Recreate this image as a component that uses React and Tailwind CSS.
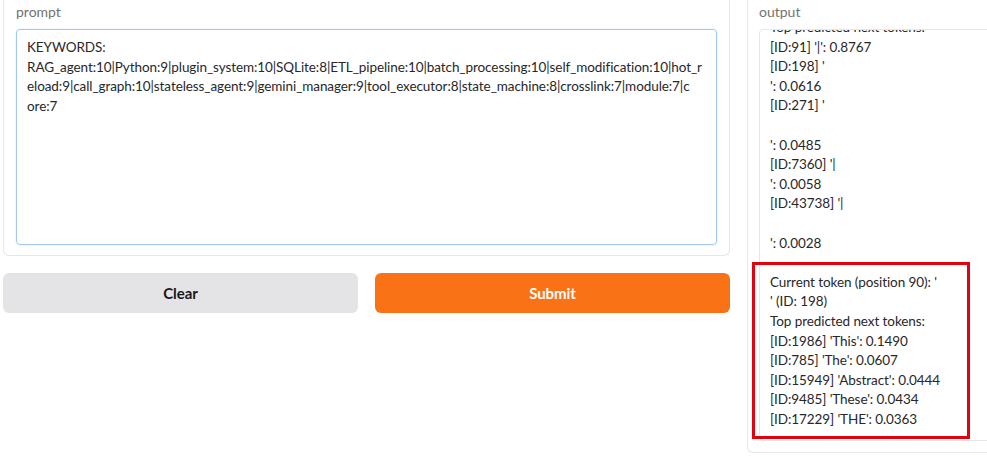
import React from "react";

const promptLines = [
  "KEYWORDS:",
  "RAG_agent:10|Python:9|plugin_system:10|SQLite:8|ETL_pipeline:10|batch_processing:10|self_modification:10|hot_r",
  "eload:9|call_graph:10|stateless_agent:9|gemini_manager:9|tool_executor:8|state_machine:8|crosslink:7|module:7|c",
  "ore:7",
];

const outputLines = [
  "Top predicted next tokens:",
  "[ID:91] '|': 0.8767",
  "[ID:198] '",
  "': 0.0616",
  "[ID:271] '",
  "",
  "': 0.0485",
  "[ID:7360] '|",
  "': 0.0058",
  "[ID:43738] '|",
  "",
  "': 0.0028",
  "",
  "Current token (position 90): '",
  "' (ID: 198)",
  "Top predicted next tokens:",
  "[ID:1986] 'This': 0.1490",
  "[ID:785] 'The': 0.0607",
  "[ID:15949] 'Abstract': 0.0444",
  "[ID:9485] 'These': 0.0434",
  "[ID:17229] 'THE': 0.0363",
];

export default function App() {
  return (
    <div className="relative w-[987px] h-[463px] overflow-hidden bg-white font-['Lato',sans-serif] text-[13.5px] tracking-[-0.08px] text-[#27272a]">
      <div className="flex items-start gap-[17px] pl-[3px]">
        <div className="w-[727px] flex flex-col gap-[17px] shrink-0">
          <div className="border border-t-0 border-[#e5e7eb] rounded-b-[6px] px-[12px] pb-[10px]">
            <div className="h-[29px] leading-[24px] text-[14px] tracking-normal text-[#737373]">prompt</div>
            <div className="h-[216px] border border-[#a3c9f1] rounded-[4px] px-[10px] pt-[8px] leading-[19.6px] shadow-[0_0_0_1px_rgba(163,201,241,0.15)]">
              {promptLines.map((l, i) => (
                <div key={i} className="whitespace-nowrap">{l}</div>
              ))}
            </div>
          </div>
          <div className="grid grid-cols-2 gap-[17px]">
            <button className="h-[40px] rounded-[6px] bg-[#e4e4e7] font-bold text-[15px] text-[#18181b]">Clear</button>
            <button className="h-[40px] rounded-[6px] bg-[#f97316] font-bold text-[15px] text-white">Submit</button>
          </div>
        </div>
        <div className="w-[260px] h-[453px] shrink-0 border border-t-0 border-[#e5e7eb] rounded-bl-[6px] px-[11px] pb-[11px] flex flex-col">
          <div className="h-[29px] leading-[24px] text-[14px] tracking-normal text-[#737373]">output</div>
          <div className="flex-1 border border-[#e5e7eb] rounded-l-[4px] overflow-hidden px-[10px]">
            <div className="mt-[-12px] leading-[19.6px]">
              {outputLines.map((l, i) => (
                <div key={i} className="whitespace-pre h-[19.6px]">{l}</div>
              ))}
            </div>
          </div>
        </div>
      </div>
      <div className="absolute left-[752px] top-[262px] w-[218px] h-[177px] border-[3px] border-[#e3000f]"></div>
    </div>
  );
}
